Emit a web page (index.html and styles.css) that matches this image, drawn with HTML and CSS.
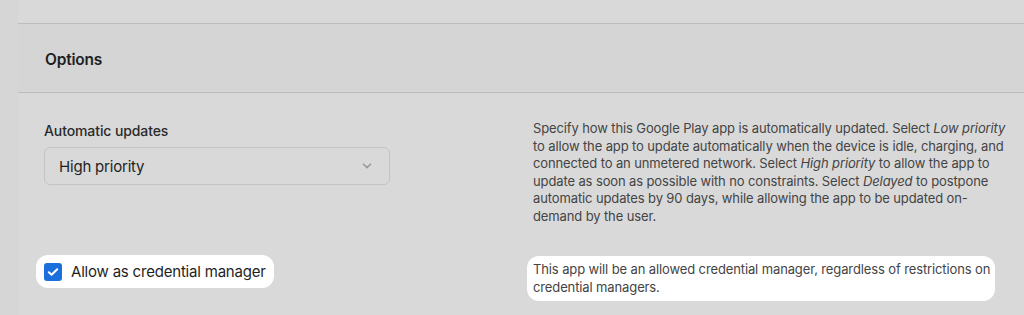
FILE: index.html
```html
<!DOCTYPE html>
<html lang="en">
<head>
<meta charset="UTF-8">
<meta name="viewport" content="width=device-width, initial-scale=1.0">
<title>Options</title>
<link rel="stylesheet" href="styles.css">
</head>
<body>

<div class="page">
  <div class="rail"></div>
  <div class="panel">
    <div class="top-strip"></div>

    <!-- セクション見出し -->
    <div class="section-head">Options</div>

    <!-- 自動更新 -->
    <div class="row">
      <div class="field">
        <div class="field-label">Automatic updates</div>
        <div class="select">
          <span>High priority</span>
          <svg class="chevron" width="10" height="6" viewBox="0 0 10 6"><path d="M1.5 1.2 5 4.6 8.5 1.2" fill="none" stroke="#9a9a9a" stroke-width="1.6" stroke-linecap="round" stroke-linejoin="round"/></svg>
        </div>
      </div>
      <p class="help">Specify how this Google Play app is automatically updated. Select <i>Low priority</i> to allow the app to update automatically when the device is idle, charging, and connected to an unmetered network. Select <i>High priority</i> to allow the app to update as soon as possible with no constraints. Select <i>Delayed</i> to postpone automatic updates by 90 days, while allowing the app to be updated on-demand by the user.</p>
    </div>

    <!-- 認証情報マネージャー -->
    <div class="row row-check">
      <div class="field">
        <label class="check spot">
          <span class="box">
            <svg width="12" height="10" viewBox="0 0 12 10"><path d="M1.8 5.2 4.6 7.8 10.2 2.2" fill="none" stroke="#fff" stroke-width="2" stroke-linecap="round" stroke-linejoin="round"/></svg>
          </span>
          Allow as credential manager
        </label>
      </div>
      <p class="help spot">This app will be an allowed credential manager, regardless of restrictions on credential managers.</p>
    </div>
  </div>
</div>

</body>
</html>
```

FILE: styles.css
```css
body {
  margin: 0;
  font-family: 'Inter', 'Noto Sans', sans-serif;
  background-color: #d9d9d9;
  color: #1f1f1f;
}
.page {
  display: flex;
  height: 315px;
  overflow: hidden;
}
.rail {
  width: 18px;
  flex-shrink: 0;
  background-color: #d6d6d6;
}
.panel {
  flex: 1;
  background-color: #d9d9d9;
}
.top-strip {
  height: 23px;
  border-bottom: 1px solid #bcbcbc;
}
.section-head {
  height: 69px;
  box-sizing: border-box;
  padding: 26px 0 0 27px;
  font-size: 15.5px;
  font-weight: 600;
  letter-spacing: -0.2px;
  background-color: #d5d5d5;
  border-bottom: 1px solid #bcbcbc;
}
.row {
  display: flex;
  justify-content: space-between;
  padding: 0 13px 0 26px;
}
.field {
  width: 346px;
}
.field-label {
  margin-top: 29px;
  font-size: 14px;
  font-weight: 500;
  color: #2a2a2a;
  letter-spacing: -0.1px;
}
.select {
  display: flex;
  align-items: center;
  justify-content: space-between;
  height: 38px;
  box-sizing: border-box;
  margin-top: 8px;
  padding: 0 17px 0 14px;
  border: 1px solid #c4c4c4;
  border-radius: 6px;
  font-size: 15px;
  letter-spacing: -0.2px;
}
.help {
  width: 478px;
  margin: 27px 0 0;
  font-size: 13px;
  line-height: 17.5px;
  color: #444;
  letter-spacing: -0.12px;
}
.spot {
  background-color: #fff;
  border-radius: 12px;
}
.check {
  display: inline-flex;
  align-items: center;
  gap: 9px;
  margin: 30px 0 0 -8px;
  padding: 7px 8px;
  font-size: 15px;
  letter-spacing: -0.2px;
}
.box {
  display: flex;
  align-items: center;
  justify-content: center;
  width: 18px;
  height: 18px;
  border-radius: 3px;
  background-color: #1b6fdd;
}
.row-check .help {
  width: 460px;
  margin: 31px 16px 0 0;
  padding: 5px 2px 5px 6px;
}
```
